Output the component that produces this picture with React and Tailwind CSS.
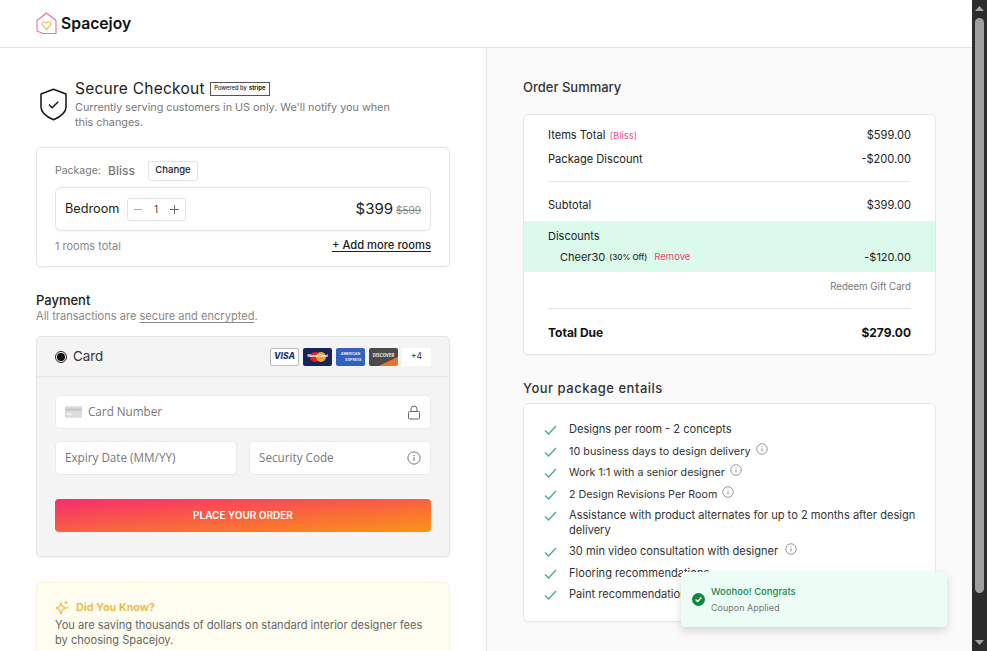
import React from "react";

const Info = ({ size = 12, color = "#777", className = "" }) => (
  <svg width={size} height={size} viewBox="0 0 16 16" fill="none" stroke={color} strokeWidth="1" className={className}>
    <circle cx="8" cy="8" r="7" />
    <path d="M8 7.2v4M8 4.6v1" strokeWidth="1.2" />
  </svg>
);

const Check = () => (
  <svg width="13" height="10" viewBox="0 0 13 10" fill="none" stroke="#3fae8c" strokeWidth="1.3" className="shrink-0">
    <path d="M1 5.5 4.5 9 12 1" />
  </svg>
);

const Logo = () => (
  <svg width="21" height="23" viewBox="0 0 21 23" fill="none">
    <path d="M1 8.5 10.5 1 20 8.5V21.5H7L1 19Z" stroke="#e2798f" strokeWidth="1.1" strokeLinejoin="round" />
    <path d="M10.5 17.5 6.5 13C5.5 10.5 8.5 9 10.5 11 12.5 9 15.5 10.5 14.5 13Z" stroke="#eec26a" strokeWidth="1.2" />
  </svg>
);

const Row = ({ className = "", children }) => (
  <div className={`flex justify-between items-center ${className}`}>{children}</div>
);

const Entail = ({ children, info, gap = "ml-[5px]", h = "h-[21.5px]", text = "" }) => (
  <li className={`flex items-start gap-[12px] ${h}`}>
    <span className="mt-[6px] flex"><Check /></span>
    <span className="flex items-start leading-[21px]">
      <span className={text}>{children}</span>
      {info && <Info className={`${gap} mt-[2px] shrink-0`} />}
    </span>
  </li>
);

export default function App() {
  return (
    <div className="flex h-[651px] w-[987px] overflow-hidden bg-white text-[#222] font-['Inter','Noto_Sans',sans-serif]">
      <div className="relative flex w-[972px] flex-col">
        <header className="flex h-[48px] shrink-0 items-center gap-[4px] border-b border-[#e2e2e2] bg-white pl-[36px]">
          <Logo />
          <span className="text-[15.7px] font-semibold text-[#111]">Spacejoy</span>
        </header>

        <div className="flex min-h-0 flex-1">
          <main className="w-[487px] shrink-0 overflow-hidden border-r border-[#e2e2e2] pl-[36px] pr-[36px] pt-[31px]">
            <section className="flex items-start gap-[8px] pl-[4px]">
              <svg width="27" height="33" viewBox="0 0 27 33" fill="none" className="mt-[9px] shrink-0" stroke="#111" strokeWidth="1.5">
                <path d="M13.5 1.2 26 6v13c0 6-6 10-12.5 12.8C7 29 1 25 1 19V6Z" strokeLinejoin="round" />
                <path d="M9 16.5l3.2 3.2 6-6" strokeWidth="1.4" />
              </svg>
              <div className="w-[330px]">
                <div className="flex items-center gap-[5px]">
                  <h1 className="text-[15.5px] font-normal leading-[19px] tracking-[0.25px] text-[#222]">Secure Checkout</h1>
                  <span className="flex h-[14px] w-[60px] items-center justify-center whitespace-nowrap border border-[#555] text-[5.8px] font-medium text-[#222]">
                    Powered by <b className="ml-[2px]">stripe</b>
                  </span>
                </div>
                <p className="mt-[2px] text-[10.8px] leading-[15px] text-[#777]">
                  Currently serving customers in US only. We'll notify you when this changes.
                </p>
              </div>
            </section>

            <section className="mt-[17px] h-[120px] rounded-[5px] border border-[#e3e3e3] px-[18px] pt-[12px] shadow-[0_1px_2px_rgba(0,0,0,0.04)]">
              <div className="flex h-[21px] items-center">
                <span className="w-[53px] text-[10.5px] text-[#777]">Package:</span>
                <span className="w-[40px] text-[12px] font-medium text-[#777]">Bliss</span>
                <span className="flex h-[20px] w-[50px] items-center justify-center rounded-[3px] border border-[#e3e3e3] text-[9.5px] font-medium text-[#222]">Change</span>
              </div>
              <div className="mt-[6px] flex h-[44px] items-center rounded-[6px] border border-[#e3e3e3] pl-[9px] pr-[9px] shadow-[0_1px_2px_rgba(0,0,0,0.04)]">
                <span className="w-[62px] text-[12.7px] text-[#222]">Bedroom</span>
                <div className="flex h-[23px] w-[59px] items-center justify-between rounded-[3px] border border-[#e3e3e3] px-[6px] text-[#777]">
                  <span className="h-px w-[8px] bg-[#aaa]" />
                  <span className="text-[10px] text-[#444]">1</span>
                  <svg width="9" height="9" viewBox="0 0 9 9" stroke="#666" strokeWidth="1"><path d="M4.5 0v9M0 4.5h9" /></svg>
                </div>
                <div className="ml-auto flex items-baseline gap-[2px]">
                  <span className="text-[15px] text-[#222]">$399</span>
                  <span className="ml-[1px] text-[10px] text-[#888] line-through">$599</span>
                </div>
              </div>
              <Row className="mt-[5px] h-[18px]">
                <span className="mt-[2px] text-[11px] text-[#888]">1 rooms total</span>
                <span className="text-[11.2px] font-medium text-[#222] underline underline-offset-2">+ Add more rooms</span>
              </Row>
            </section>

            <section className="mt-[25px]">
              <h2 className="text-[13px] font-medium leading-[16px] text-[#222]">Payment</h2>
              <p className="mt-[1px] text-[11.1px] leading-[15px] text-[#888]">
                All transactions are <span className="underline underline-offset-2">secure and encrypted</span>.
              </p>
            </section>

            <section className="mt-[12px] h-[221px] rounded-[5px] border border-[#e6e6e6] bg-[#f4f4f4] shadow-[0_1px_2px_rgba(0,0,0,0.06)]">
              <div className="flex h-[40px] items-center border-b border-[#e8e8e8] pl-[18px] pr-[18px]">
                <span className="flex h-[12px] w-[12px] items-center justify-center rounded-full border border-[#222]">
                  <span className="h-[8px] w-[8px] rounded-full bg-[#111]" />
                </span>
                <span className="ml-[6px] text-[13.4px] text-[#333]">Card</span>
                <div className="ml-auto flex items-center gap-[4px]">
                  <span className="flex h-[18px] w-[29px] items-center justify-center rounded-[2px] border border-[#bbb] bg-white text-[8.5px] font-extrabold italic text-[#1d3a78]">VISA</span>
                  <span className="relative flex h-[18px] w-[29px] items-center justify-center rounded-[2px] bg-[#16265c]">
                    <svg width="20" height="12" viewBox="0 0 20 12"><circle cx="7" cy="6" r="5" fill="#d9222a" /><circle cx="13" cy="6" r="5" fill="#ee9f2d" /></svg>
                    <span className="absolute text-[3.5px] font-bold text-white">MasterCard</span>
                  </span>
                  <span className="flex h-[18px] w-[29px] flex-col items-center justify-center rounded-[2px] bg-[#2f61c4] text-[3.6px] font-bold leading-[6px] text-[#dfe9fb]">
                    <span>AMERICAN</span>
                    <span className="ml-[6px]">EXPRESS</span>
                  </span>
                  <span className="flex h-[18px] w-[29px] items-center justify-center overflow-hidden rounded-[2px] bg-[linear-gradient(155deg,#4a4a48_70%,#e8742c_72%)] text-[4.2px] font-bold text-[#eee]">DISCOVER</span>
                  <span className="flex h-[18px] w-[29px] items-center justify-center rounded-[2px] bg-white text-[8.5px] text-[#333]">+4</span>
                </div>
              </div>

              <div className="px-[18px] pt-[18px] font-['Open_Sans','Noto_Sans',sans-serif] text-[11.7px] text-[#777]">
                <div className="flex h-[34px] items-center rounded-[5px] border border-[#ebebeb] bg-white pl-[9px] pr-[9px]">
                  <svg width="17" height="12" viewBox="0 0 18 12" className="mr-[6px]">
                    <rect width="18" height="12" rx="1" fill="#dcdcdc" />
                    <rect y="2.5" width="18" height="2" fill="#c4c4c4" />
                    <rect x="2" y="7" width="5" height="2.5" fill="#f2f2f2" />
                  </svg>
                  <span>Card Number</span>
                  <svg width="14" height="15" viewBox="0 0 14 15" fill="none" stroke="#666" className="ml-auto">
                    <rect x="1.5" y="6.5" width="11" height="7.5" rx="1" />
                    <path d="M4 6.5V4a3 3 0 0 1 6 0v2.5" />
                  </svg>
                </div>
                <div className="mt-[12px] grid grid-cols-2 gap-[12px]">
                  <div className="flex h-[34px] items-center rounded-[5px] border border-[#ebebeb] bg-white pl-[9px]">Expiry Date (MM/YY)</div>
                  <div className="flex h-[34px] items-center justify-between rounded-[5px] border border-[#ebebeb] bg-white pl-[9px] pr-[9px]">
                    <span>Security Code</span>
                    <Info size={14} color="#666" />
                  </div>
                </div>
              </div>

              <div className="mx-[18px] mt-[24px] flex h-[33px] items-center justify-center rounded-[4px] bg-[linear-gradient(to_bottom_right,#f72c70,#fa9514)] text-[10px] font-semibold text-white">
                PLACE YOUR ORDER
              </div>
            </section>

            <section className="mt-[25px] h-[90px] rounded-[5px] border border-[#fbf4da] bg-[#fffdf0] px-[18px] pt-[16px]">
              <div className="flex items-center gap-[6px]">
                <svg width="15" height="15" viewBox="0 0 15 15" fill="none" stroke="#eeb63c" strokeWidth="1.1">
                  <path d="M6 3l1.4 3.6L11 8 7.4 9.4 6 14 4.6 9.4 1 8l3.6-1.4Z" strokeLinejoin="round" />
                  <path d="M11 1v3M9.5 2.5h3M13 6.5v2" />
                </svg>
                <span className="text-[10.9px] font-semibold text-[#eeb63c]">Did You Know?</span>
              </div>
              <p className="mt-[3px] text-[11.1px] leading-[15px] text-[#666]">
                You are saving thousands of dollars on standard interior designer fees by choosing Spacejoy.
              </p>
            </section>
          </main>

          <aside className="flex-1 overflow-hidden bg-[#fafafa] pl-[36px] pr-[36px] pt-[31px]">
            <h2 className="text-[13px] font-medium leading-[16px] text-[#333]">Order Summary</h2>

            <section className="mt-[19px] h-[241px] overflow-hidden rounded-[5px] border border-[#e6e6e6] bg-white shadow-[0_1px_2px_rgba(0,0,0,0.04)]">
              <div className="px-[24px] pt-[8px] text-[11.1px] text-[#222]">
                <Row className="h-[24px]">
                  <span>Items Total <span className="ml-[1px] text-[9.5px] text-[#e5558c]">(Bliss)</span></span>
                  <span>$599.00</span>
                </Row>
                <Row className="h-[24px]">
                  <span>Package Discount</span>
                  <span>-$200.00</span>
                </Row>
                <div className="mt-[10px] h-px bg-[#e6e6e6]" />
                <Row className="mt-[12px] h-[23px]">
                  <span>Subtotal</span>
                  <span>$399.00</span>
                </Row>
              </div>
              <div className="mt-[4px] h-[51px] bg-[#dbfaec] pl-[24px] pr-[24px] pt-[5px] text-[11px] text-[#222]">
                <div className="h-[20px] leading-[20px]">Discounts</div>
                <Row className="h-[22px] pl-[12px]">
                  <span className="flex items-center">
                    Cheer30
                    <span className="ml-[4px] text-[8px] font-medium">(30% Off)</span>
                    <span className="ml-[7px] text-[9.5px] text-[#e0476f]">Remove</span>
                  </span>
                  <span>-$120.00</span>
                </Row>
              </div>
              <div className="px-[24px]">
                <div className="mt-[7px] h-[16px] text-right text-[9.7px] leading-[16px] text-[#777]">Redeem Gift Card</div>
                <div className="mt-[13px] h-px bg-[#e6e6e6]" />
                <Row className="mt-[14px] h-[20px] text-[12px] font-bold text-[#111]">
                  <span>Total Due</span>
                  <span>$279.00</span>
                </Row>
              </div>
            </section>

            <h2 className="mt-[25px] text-[13px] font-medium leading-[16px] tracking-[0.5px] text-[#333]">Your package entails</h2>

            <section className="mt-[7px] h-[219px] rounded-[5px] border border-[#e6e6e6] bg-white pl-[20px] pr-[16px] pt-[15px] shadow-[0_1px_2px_rgba(0,0,0,0.04)]">
              <ul className="text-[11.1px] text-[#333]">
                <Entail>Designs per room - 2 concepts</Entail>
                <Entail info text="text-[10.85px]">10 business days to design delivery</Entail>
                <Entail info text="text-[10.7px]">Work 1:1 with a senior designer</Entail>
                <Entail info text="text-[10.75px]">2 Design Revisions Per Room</Entail>
                <Entail h="h-[36px]">
                  <span className="block pt-[3px] leading-[15px]">Assistance with product alternates for up to 2 months after design delivery</span>
                </Entail>
                <Entail info gap="ml-[7px]">30 min video consultation with designer</Entail>
                <Entail>Flooring recommendations</Entail>
                <Entail>Paint recommendations</Entail>
              </ul>
            </section>
          </aside>
        </div>

        <div className="absolute left-[681px] top-[572px] flex h-[55px] w-[266px] items-center rounded-[4px] bg-[#ecfdf5] pl-[11px] shadow-[0_4px_10px_rgba(0,0,0,0.15)]">
          <svg width="13" height="13" viewBox="0 0 13 13" className="shrink-0">
            <circle cx="6.5" cy="6.5" r="6.5" fill="#0f8a3c" />
            <path d="M3.6 6.6l2 2 3.8-4" fill="none" stroke="#fff" strokeWidth="1.4" />
          </svg>
          <div className="ml-[6px]">
            <div className="text-[9.5px] font-medium leading-[16px] text-[#1d8a4a]">Woohoo! Congrats</div>
            <div className="text-[9px] leading-[16px] text-[#777]">Coupon Applied</div>
          </div>
        </div>
      </div>

      <div className="flex w-[15px] shrink-0 flex-col items-center bg-[#2c2c2c]">
        <svg width="9" height="5" viewBox="0 0 9 5" className="mt-[6px]"><path d="M4.5 0 9 5H0Z" fill="#a3a3a3" /></svg>
        <div className="mt-[7px] h-[575px] w-[9px] rounded-[5px] bg-[#9f9f9f]" />
        <svg width="9" height="5" viewBox="0 0 9 5" className="mt-auto mb-[6px]"><path d="M4.5 5 9 0H0Z" fill="#a3a3a3" /></svg>
      </div>
    </div>
  );
}
